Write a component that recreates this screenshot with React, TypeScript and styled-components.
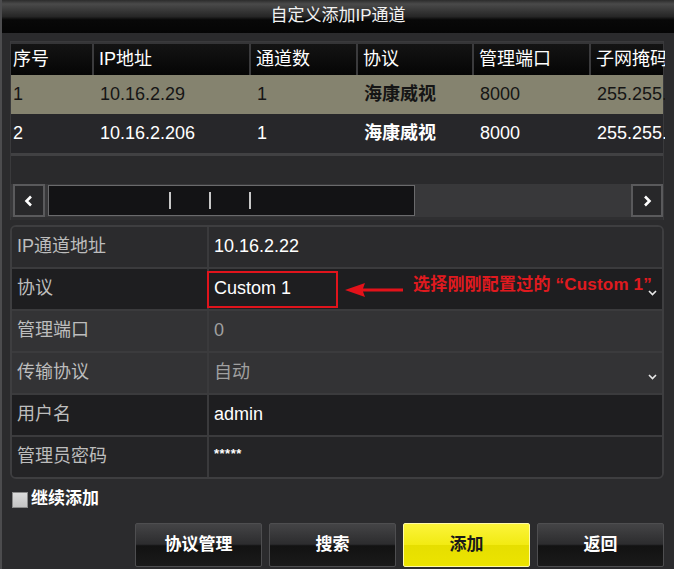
import * as React from 'react';
import styled, { createGlobalStyle, css } from 'styled-components';

const GlobalStyle = createGlobalStyle`
  html, body {
    margin: 0;
    padding: 0;
    background: #2c2c2e;
  }
  body {
    font-family: "Liberation Sans", "Noto Sans CJK SC", Arial, sans-serif;
    line-height: 1.2;
  }
`;

const Window = styled.div`
  width: 674px;
  height: 569px;
  box-sizing: border-box;
  display: flex;
  flex-direction: column;
  background: #2b2b2d;
  border-left: 2px solid #4c4c4e;
  overflow: hidden;
`;

const TitleBar = styled.div`
  height: 33px;
  flex-shrink: 0;
  display: flex;
  align-items: center;
  justify-content: center;
  background: linear-gradient(to bottom, #2c2c2c 0%, #4a4a4a 12%, #262626 50%, #080808 60%, #050505 100%);
  color: #f2f2f2;
  font-size: 17px;
`;

const Content = styled.div`
  flex: 1;
  display: flex;
  flex-direction: column;
  padding: 8px 10px 0 8px;
`;

/* ---------- table ---------- */

const Grid = styled.div`
  border: 1px solid #3a3a3c;
  border-bottom: none;
  background: #29292b;
`;

const HeaderRow = styled.div`
  display: flex;
  height: 33px;
  background: linear-gradient(to bottom, #141414, #050505);
  border-top: 2px solid #353537;
  box-sizing: border-box;
`;

const HeaderCell = styled.div<{ $w: number }>`
  width: ${(p) => p.$w}px;
  flex-shrink: 0;
  box-sizing: border-box;
  padding-left: 5px;
  display: flex;
  align-items: center;
  color: #ffffff;
  font-size: 18px;
  white-space: nowrap;
  overflow: hidden;
  border-right: 2px solid #3b3b3d;
  &:first-child {
    padding-left: 2px;
  }
  &:last-child {
    border-right: none;
  }
`;

const DataRow = styled.div<{ $selected?: boolean }>`
  display: flex;
  height: 39px;
  background: ${(p) => (p.$selected ? '#85836f' : '#27272a')};
  color: ${(p) => (p.$selected ? '#151515' : '#ffffff')};
`;

const DataCell = styled.div<{ $w: number; $bold?: boolean }>`
  width: ${(p) => p.$w}px;
  flex-shrink: 0;
  box-sizing: border-box;
  padding-left: 6px;
  display: flex;
  align-items: center;
  font-size: 18px;
  font-weight: ${(p) => (p.$bold ? 700 : 400)};
  white-space: nowrap;
  overflow: hidden;
  &:first-child {
    padding-left: 2px;
  }
`;

const EmptyArea = styled.div`
  height: 28px;
  border-top: 3px solid #414143;
  background: #2a2a2c;
`;

/* ---------- scroll bar ---------- */

const ScrollBar = styled.div`
  display: flex;
  height: 33px;
  background: #38383a;
  border-bottom: 3px solid #2f2f31;
  padding-left: 2px;
`;

const ArrowButton = styled.div`
  width: 32px;
  flex-shrink: 0;
  box-sizing: border-box;
  border: 2px solid #5a5a5c;
  background: #28282a;
  display: flex;
  align-items: center;
  justify-content: center;
`;

const Thumb = styled.div`
  width: 367px;
  margin: 1px 0 1px 3px;
  box-sizing: border-box;
  border: 1px solid #6a6a6c;
  background: #131315;
  display: flex;
  align-items: center;
  gap: 38px;
  padding-left: 120px;
`;

const Grip = styled.div`
  width: 2px;
  height: 17px;
  background: #c8c8c8;
`;

const TrackFill = styled.div`
  flex: 1;
`;

/* ---------- form ---------- */

const Form = styled.div`
  margin-top: 5px;
  border: 2px solid #3e3e40;
  border-radius: 6px;
  overflow: hidden;
`;

const toneColor = {
  base: '#2b2b2d',
  dark: '#1e1e20',
  light: '#333335',
  mid: '#242426',
};

const FormRow = styled.div<{ $tone: keyof typeof toneColor }>`
  position: relative;
  display: flex;
  height: 42px;
  box-sizing: border-box;
  background: ${(p) => toneColor[p.$tone]};
  border-bottom: 2px solid #3b3b3d;
  &:last-child {
    border-bottom: none;
    height: 40px;
  }
`;

const Label = styled.div`
  width: 197px;
  flex-shrink: 0;
  box-sizing: border-box;
  padding-left: 5px;
  display: flex;
  align-items: center;
  border-right: 2px solid #3a3a3c;
  color: #bdbdbd;
  font-size: 18px;
`;

const Value = styled.div<{ $muted?: boolean }>`
  flex: 1;
  padding-left: 5px;
  display: flex;
  align-items: center;
  color: ${(p) => (p.$muted ? '#a0a0a0' : '#ffffff')};
  font-size: 18px;
`;

const Secret = styled.span`
  font-size: 13px;
  font-weight: 700;
  letter-spacing: 0.5px;
  margin-top: -6px;
`;

const Chevron = styled.svg`
  position: absolute;
  right: 5px;
  top: 21px;
`;

/* annotation overlay */

const RedBox = styled.div`
  position: absolute;
  left: 195px;
  top: 2px;
  width: 131px;
  height: 37px;
  box-sizing: border-box;
  border: 2px solid #e0141c;
`;

const RedArrow = styled.svg`
  position: absolute;
  left: 333px;
  top: 13px;
`;

const RedNote = styled.div`
  position: absolute;
  left: 401px;
  top: 6px;
  color: #e01a1f;
  font-size: 17px;
  font-weight: 700;
  white-space: nowrap;
  letter-spacing: 0.2px;
`;

/* ---------- footer ---------- */

const CheckRow = styled.label`
  display: flex;
  align-items: center;
  gap: 3px;
  height: 41px;
  margin-left: 2px;
  color: #ffffff;
  font-size: 17px;
  font-weight: 700;
`;

const CheckBox = styled.span`
  width: 16px;
  height: 16px;
  background: linear-gradient(#dcdcdc, #c4c4c4);
  border: 1px solid #8a8a8a;
  box-sizing: border-box;
`;

const ButtonRow = styled.div`
  display: flex;
  justify-content: flex-end;
  gap: 7px;
  margin-top: 3px;
`;

const Button = styled.div<{ $primary?: boolean }>`
  width: 127px;
  height: 44px;
  box-sizing: border-box;
  display: flex;
  align-items: center;
  justify-content: center;
  font-size: 17px;
  font-weight: 700;
  border-radius: 2px;
  ${(p) =>
    p.$primary
      ? css`
          color: #1a1a1a;
          background: linear-gradient(to bottom, #fbf43a 0%, #f2ea12 50%, #e6de00 51%, #ece400 100%);
          border: 1px solid #fffaa8;
        `
      : css`
          color: #ffffff;
          background: linear-gradient(to bottom, #444446 0%, #2c2c2e 48%, #121212 52%, #1a1a1a 100%);
          border: 1px solid #4e4e50;
        `}
`;

const cols = [83, 157, 107, 116, 117, 74];
const headers = ['序号', 'IP地址', '通道数', '协议', '管理端口', '子网掩码'];
const rows = [
  ['1', '10.16.2.29', '1', '海康威视', '8000', '255.255.255.0'],
  ['2', '10.16.2.206', '1', '海康威视', '8000', '255.255.255.0'],
];

const DownIcon = () => (
  <Chevron width="9" height="6" viewBox="0 0 9 6">
    <polyline points="1,1 4.5,4.5 8,1" fill="none" stroke="#e8e8e8" strokeWidth="1.6" />
  </Chevron>
);

export default function App() {
  return (
    <>
      <GlobalStyle />
      <Window>
        <TitleBar>自定义添加IP通道</TitleBar>
        <Content>
          <Grid>
            <HeaderRow>
              {headers.map((h, i) => (
                <HeaderCell key={h} $w={cols[i]}>
                  {h}
                </HeaderCell>
              ))}
            </HeaderRow>
            {rows.map((r, ri) => (
              <DataRow key={ri} $selected={ri === 0}>
                {r.map((c, i) => (
                  <DataCell key={i} $w={cols[i]} $bold={i === 3}>
                    {c}
                  </DataCell>
                ))}
              </DataRow>
            ))}
            <EmptyArea />
            <ScrollBar>
              <ArrowButton>
                <svg width="10" height="12" viewBox="0 0 10 12">
                  <polyline points="7,1.5 2.5,6 7,10.5" fill="none" stroke="#ffffff" strokeWidth="2.6" />
                </svg>
              </ArrowButton>
              <Thumb>
                <Grip />
                <Grip />
                <Grip />
              </Thumb>
              <TrackFill />
              <ArrowButton>
                <svg width="10" height="12" viewBox="0 0 10 12">
                  <polyline points="3,1.5 7.5,6 3,10.5" fill="none" stroke="#ffffff" strokeWidth="2.6" />
                </svg>
              </ArrowButton>
            </ScrollBar>
          </Grid>

          <Form>
            <FormRow $tone="base">
              <Label>IP通道地址</Label>
              <Value>10.16.2.22</Value>
            </FormRow>
            <FormRow $tone="dark">
              <Label>协议</Label>
              <Value>Custom 1</Value>
              <RedBox />
              <RedArrow width="58" height="16" viewBox="0 0 58 16">
                <polygon points="0,8 20,1 18,6.5 58,6.5 58,9.5 18,9.5 20,15" fill="#e3121a" />
              </RedArrow>
              <RedNote>选择刚刚配置过的 “Custom 1”</RedNote>
              <DownIcon />
            </FormRow>
            <FormRow $tone="light">
              <Label>管理端口</Label>
              <Value $muted>0</Value>
            </FormRow>
            <FormRow $tone="light">
              <Label>传输协议</Label>
              <Value $muted>自动</Value>
              <DownIcon />
            </FormRow>
            <FormRow $tone="dark">
              <Label>用户名</Label>
              <Value>admin</Value>
            </FormRow>
            <FormRow $tone="mid">
              <Label>管理员密码</Label>
              <Value>
                <Secret>*****</Secret>
              </Value>
            </FormRow>
          </Form>

          <CheckRow>
            <CheckBox />
            继续添加
          </CheckRow>

          <ButtonRow>
            <Button>协议管理</Button>
            <Button>搜索</Button>
            <Button $primary>添加</Button>
            <Button>返回</Button>
          </ButtonRow>
        </Content>
      </Window>
    </>
  );
}
